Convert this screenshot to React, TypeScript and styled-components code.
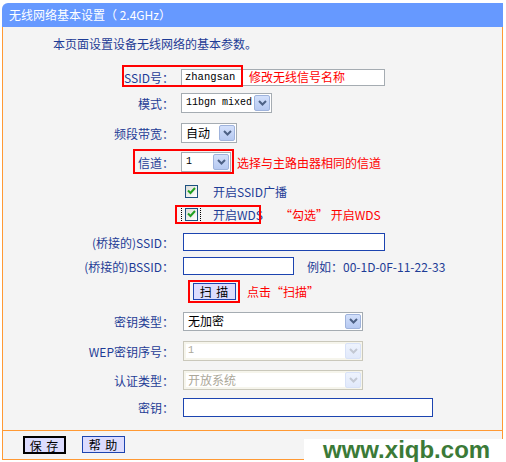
import React from "react";
import styled, { createGlobalStyle } from "styled-components";

const GlobalStyle = createGlobalStyle`
  html, body { margin: 0; padding: 0; background: #ffffff; }
  body { font-family: "Noto Sans CJK SC", "Noto Sans", sans-serif; font-size: 12px; }
  * { box-sizing: border-box; }
`;

const BLUE_TEXT = "#1e3c96";
const ORANGE = "#ff9933";
const RED = "#ff0000";

const Page = styled.div`
  position: relative;
  width: 506px;
  height: 462px;
  overflow: hidden;
  padding: 3px 0 0 2px;
`;

const Frame = styled.div`
  width: 501px;
`;

const Header = styled.div`
  height: 24px;
  background: #6699ff;
  border-top-left-radius: 6px;
  color: #ffffff;
  font-size: 12px;
  line-height: 24px;
  padding-left: 7px;
  white-space: nowrap;
`;

const Body = styled.div`
  background: #f4f4f4;
  border-left: 1px solid ${ORANGE};
  border-right: 1px solid ${ORANGE};
  padding: 7px 0 13px 0;
`;

const Intro = styled.div`
  height: 20px;
  line-height: 20px;
  margin-bottom: 13px;
  padding-left: 50px;
  color: ${BLUE_TEXT};
`;

const Row = styled.div<{ $h: number }>`
  position: relative;
  display: flex;
  align-items: flex-start;
  height: ${(p) => p.$h}px;
`;

const Label = styled.div`
  width: 171px;
  height: 20px;
  display: flex;
  align-items: center;
  justify-content: flex-end;
  color: ${BLUE_TEXT};
  white-space: nowrap;
`;

const Field = styled.div`
  margin-left: 7px;
  height: 20px;
  display: flex;
  align-items: center;
  white-space: nowrap;
`;

const TextBox = styled.div<{ $w: number; $h: number; $tone: "gray" | "blue"; $ml?: number }>`
  width: ${(p) => p.$w}px;
  height: ${(p) => p.$h}px;
  margin-left: ${(p) => p.$ml ?? 0}px;
  background: #ffffff;
  border: 1px solid ${(p) => (p.$tone === "gray" ? "#a5acb2" : "#1c44b0")};
  display: flex;
  align-items: center;
  padding-left: 3px;
  font-family: "Liberation Mono", monospace;
  font-size: 10.5px;
  color: #000;
`;

const SelectBox = styled.div<{ $w: number; $h: number; $disabled?: boolean; $ml?: number }>`
  position: relative;
  width: ${(p) => p.$w}px;
  height: ${(p) => p.$h}px;
  margin-left: ${(p) => p.$ml ?? 0}px;
  background: #ffffff;
  border: 1px solid ${(p) => (p.$disabled ? "#cac8bb" : "#a5acb2")};
  box-shadow: ${(p) => (p.$disabled ? "inset 0 0 0 2px #f6f5ec" : "none")};
  display: flex;
  align-items: center;
  padding-left: 4px;
  color: ${(p) => (p.$disabled ? "#aca899" : "#000000")};
`;

const SelectValue = styled.span<{ $mono?: boolean }>`
  font-family: ${(p) => (p.$mono ? `"Liberation Mono", monospace` : `"Noto Sans CJK SC", sans-serif`)};
  font-size: ${(p) => (p.$mono ? "10px" : "12px")};
  line-height: 1;
`;

const ArrowBtn = styled.div<{ $disabled?: boolean }>`
  position: absolute;
  top: 1px;
  right: 1px;
  bottom: 1px;
  width: 16px;
  border: 1px solid ${(p) => (p.$disabled ? "#d8e2f8" : "#9fb3dc")};
  border-radius: 2px;
  background: ${(p) =>
    p.$disabled
      ? "linear-gradient(#eef3fd, #e1e9fb)"
      : "linear-gradient(#d3e0fb, #b6c9f1)"};
  display: flex;
  align-items: center;
  justify-content: center;
`;

const Chevron = ({ disabled }: { disabled?: boolean }) => (
  <svg width="9" height="6" viewBox="0 0 9 6">
    <path
      d="M1 1 L4.5 4.5 L8 1"
      stroke={disabled ? "#c3c8d3" : "#4d6185"}
      strokeWidth="2"
      fill="none"
    />
  </svg>
);

const Select = ({
  w,
  h,
  value,
  mono,
  disabled,
  ml,
}: {
  w: number;
  h: number;
  value: string;
  mono?: boolean;
  disabled?: boolean;
  ml?: number;
}) => (
  <SelectBox $w={w} $h={h} $disabled={disabled} $ml={ml}>
    <SelectValue $mono={mono}>{value}</SelectValue>
    <ArrowBtn $disabled={disabled}>
      <Chevron disabled={disabled} />
    </ArrowBtn>
  </SelectBox>
);

const CheckWrap = styled.div<{ $focus?: boolean }>`
  width: 20px;
  height: 17px;
  display: flex;
  align-items: center;
  justify-content: center;
  outline: ${(p) => (p.$focus ? "1px dotted #000" : "none")};
  outline-offset: -1px;
`;

const CheckBox = styled.div`
  width: 13px;
  height: 13px;
  border: 1px solid #1c5180;
  background: linear-gradient(135deg, #dcdcd7, #ffffff);
  display: flex;
  align-items: center;
  justify-content: center;
`;

const CheckText = styled.span`
  margin-left: 12px;
  color: ${BLUE_TEXT};
`;

const Check = ({ focus }: { focus?: boolean }) => (
  <CheckWrap $focus={focus}>
    <CheckBox>
      <svg width="9" height="8" viewBox="0 0 9 8">
        <path d="M1 3.5 L3.5 6 L8 1" stroke="#21a121" strokeWidth="2" fill="none" />
      </svg>
    </CheckBox>
  </CheckWrap>
);

const Note = styled.span<{ $ml: number }>`
  margin-left: ${(p) => p.$ml}px;
  color: ${RED};
`;

const Hint = styled.span`
  margin-left: 13px;
  color: ${BLUE_TEXT};
`;

const RedBox = styled.div<{ $l: number; $t: number; $w: number; $h: number }>`
  position: absolute;
  left: ${(p) => p.$l}px;
  top: ${(p) => p.$t}px;
  width: ${(p) => p.$w}px;
  height: ${(p) => p.$h}px;
  border: 2px solid ${RED};
  pointer-events: none;
`;

const OverNote = styled.span`
  position: absolute;
  left: 246px;
  top: 0;
  height: 20px;
  line-height: 20px;
  color: ${RED};
`;

const Button = styled.div<{ $w: number; $focus?: boolean; $ml?: number }>`
  width: ${(p) => p.$w}px;
  height: ${(p) => (p.$focus ? 18 : 17)}px;
  margin-left: ${(p) => p.$ml ?? 0}px;
  background: #dcdcfe;
  border: ${(p) => (p.$focus ? "2px solid #000000" : "1px solid #1c44b0")};
  display: flex;
  align-items: center;
  justify-content: center;
  color: #000;
  font-size: 12px;
  letter-spacing: 1px;
  white-space: pre;
`;

const Footer = styled.div`
  height: 30px;
  background: #f4f4f4;
  border: 1px solid ${ORANGE};
  display: flex;
  align-items: flex-start;
  padding: 5px 0 0 20px;
`;

const Watermark = styled.div`
  position: absolute;
  left: 304px;
  top: 439px;
  width: 199px;
  height: 30px;
  background: #ffffff;
  padding-left: 19px;
  font-family: "Liberation Sans", Arial, sans-serif;
  font-weight: bold;
  font-size: 24px;
  line-height: 22px;
  color: #3b7a37;
`;

export default function App() {
  return (
    <>
      <GlobalStyle />
      <Page>
        <Frame>
          <Header>无线网络基本设置（ 2.4GHz）</Header>
          <Body>
            <Intro>本页面设置设备无线网络的基本参数。</Intro>

            <Row $h={26}>
              <Label>SSID号：</Label>
              <Field>
                <TextBox $w={204} $h={17} $tone="gray">zhangsan</TextBox>
              </Field>
              <RedBox $l={119} $t={-2} $w={121} $h={22} />
              <OverNote>修改无线信号名称</OverNote>
            </Row>

            <Row $h={30}>
              <Label>模式：</Label>
              <Field>
                <Select w={91} h={20} value="11bgn mixed" mono />
              </Field>
            </Row>

            <Row $h={29}>
              <Label>频段带宽：</Label>
              <Field>
                <Select w={56} h={20} value="自动" />
              </Field>
            </Row>

            <Row $h={29}>
              <Label>信道：</Label>
              <Field>
                <Select w={50} h={20} value="1" mono />
                <Note $ml={6}>选择与主路由器相同的信道</Note>
              </Field>
              <RedBox $l={130} $t={-3} $w={101} $h={25} />
            </Row>

            <Row $h={23}>
              <Label />
              <Field>
                <Check />
                <CheckText>开启SSID广播</CheckText>
              </Field>
            </Row>

            <Row $h={28}>
              <Label />
              <Field>
                <Check focus />
                <CheckText>开启WDS</CheckText>
                <Note $ml={17}>“勾选” 开启WDS</Note>
              </Field>
              <RedBox $l={172} $t={1} $w={86} $h={19} />
            </Row>

            <Row $h={24}>
              <Label>(桥接的)SSID：</Label>
              <Field>
                <TextBox $w={202} $h={18} $tone="blue" $ml={2} />
              </Field>
            </Row>

            <Row $h={25}>
              <Label>(桥接的)BSSID：</Label>
              <Field>
                <TextBox $w={111} $h={18} $tone="blue" $ml={2} />
                <Hint>例如：00-1D-0F-11-22-33</Hint>
              </Field>
            </Row>

            <Row $h={30}>
              <Label />
              <Field>
                <Button $w={43} $ml={12}>扫 描</Button>
                <Note $ml={11}>点击“扫描”</Note>
              </Field>
              <RedBox $l={185} $t={-1} $w={52} $h={23} />
            </Row>

            <Row $h={30}>
              <Label>密钥类型：</Label>
              <Field>
                <Select w={180} h={19} value="无加密" ml={2} />
              </Field>
            </Row>

            <Row $h={29}>
              <Label>WEP密钥序号：</Label>
              <Field>
                <Select w={180} h={20} value="1" mono disabled ml={2} />
              </Field>
            </Row>

            <Row $h={27}>
              <Label>认证类型：</Label>
              <Field>
                <Select w={180} h={20} value="开放系统" disabled ml={2} />
              </Field>
            </Row>

            <Row $h={20}>
              <Label>密钥：</Label>
              <Field>
                <TextBox $w={250} $h={19} $tone="blue" $ml={2} />
              </Field>
            </Row>
          </Body>
          <Footer>
            <Button $w={43} $focus>保 存</Button>
            <Button $w={43} $ml={16}>帮 助</Button>
          </Footer>
        </Frame>
        <Watermark>www.xiqb.com</Watermark>
      </Page>
    </>
  );
}
